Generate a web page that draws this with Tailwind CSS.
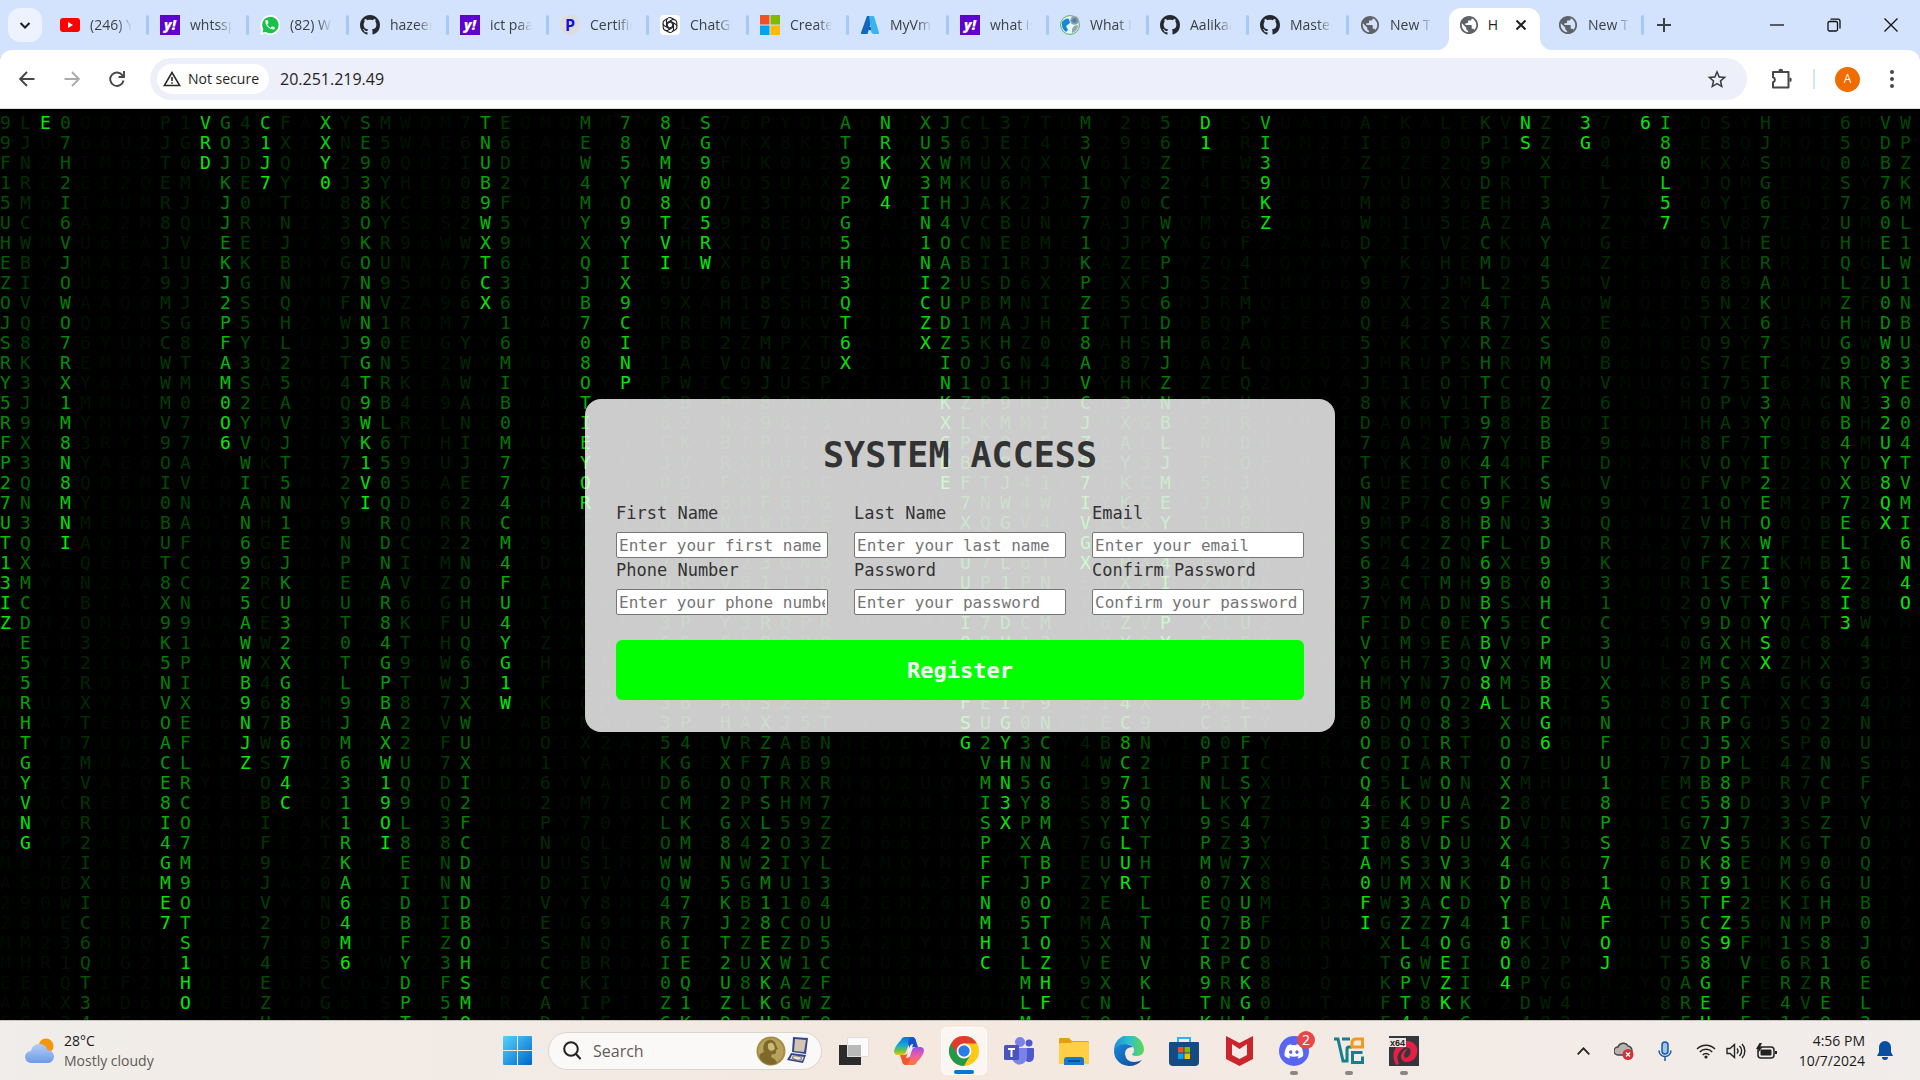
<!DOCTYPE html>
<html lang="en">
<head>
<meta charset="utf-8">
<title>System Access</title>
<script src="https://cdn.jsdelivr.net/npm/@tailwindcss/browser@4"></script>
</head>
<body class="flex min-h-screen flex-col overflow-hidden bg-black font-['Open_Sans','Noto_Sans',sans-serif]">

<svg class="hidden" aria-hidden="true">
  <symbol id="github" viewBox="0 0 16 16"><path fill="#24292f" d="M8 0C3.58 0 0 3.58 0 8c0 3.54 2.29 6.53 5.47 7.59.4.07.55-.17.55-.38 0-.19-.01-.82-.01-1.49-2.01.37-2.53-.49-2.69-.94-.09-.23-.48-.94-.82-1.13-.28-.15-.68-.52-.01-.53.63-.01 1.08.58 1.23.82.72 1.21 1.87.87 2.33.66.07-.52.28-.87.51-1.07-1.78-.2-3.64-.89-3.64-3.95 0-.87.31-1.59.82-2.15-.08-.2-.36-1.02.08-2.12 0 0 .67-.21 2.2.82.64-.18 1.32-.27 2-.27s1.36.09 2 .27c1.53-1.04 2.2-.82 2.2-.82.44 1.1.16 1.92.08 2.12.51.56.82 1.27.82 2.15 0 3.07-1.87 3.75-3.65 3.95.29.25.54.73.54 1.48 0 1.07-.01 1.93-.01 2.2 0 .21.15.46.55.38A8.01 8.01 0 0 0 16 8c0-4.42-3.58-8-8-8z"/></symbol>
  <symbol id="globe" viewBox="1 1 22 22"><path fill="#5f6368" d="M12 2C6.48 2 2 6.48 2 12s4.48 10 10 10 10-4.48 10-10S17.52 2 12 2zm-1 17.93c-3.95-.49-7-3.85-7-7.93 0-.62.08-1.21.21-1.79L9 15v1c0 1.1.9 2 2 2v1.93zm6.9-2.54c-.26-.81-1-1.39-1.9-1.39h-1v-3c0-.55-.45-1-1-1H8v-2h2c.55 0 1-.45 1-1V7h2c1.1 0 2-.9 2-2v-.41c2.93 1.19 5 4.06 5 7.41 0 2.08-.8 3.97-2.1 5.39z"/></symbol>
</svg>

<header class="shrink-0 bg-[#d3e2fd]">
  <nav class="flex h-[50px] items-center" aria-label="Tabs">
    <button class="ml-2 mr-[18px] grid h-[34px] w-[34px] shrink-0 place-items-center rounded-xl bg-[#ecf2fe]" aria-label="Search tabs"><svg class="h-3 w-3" viewBox="0 0 12 12" fill="none" stroke="#1f1f1f" stroke-width="2"><path d="M1.5 4 6 8.5 10.5 4"/></svg></button>
    <div class="flex items-center" id="tabs"></div>

    <div class="relative flex h-[50px] w-[91px] items-end">
      <button class="flex h-[42px] w-full items-center rounded-t-xl bg-white pb-2 pl-2.5"><svg class="h-5 w-5 shrink-0"><use href="#globe"/></svg><span class="ml-2 w-3 text-sm text-[#1f1f1f]">H</span><svg class="ml-4 h-3 w-3 shrink-0" viewBox="0 0 12 12" stroke="#1f1f1f" stroke-width="2"><path d="m1.5 1.5 9 9m0-9-9 9"/></svg></button>
      <svg class="absolute -left-3 bottom-0 h-3 w-3" viewBox="0 0 12 12"><path fill="#fff" d="M12 0v12H0A12 12 0 0 0 12 0z"/></svg>
      <svg class="absolute -right-3 bottom-0 h-3 w-3" viewBox="0 0 12 12"><path fill="#fff" d="M0 0v12h12A12 12 0 0 1 0 0z"/></svg>
    </div>
    <button class="ml-[18px] flex w-[83px] items-center gap-2.5"><svg class="h-5 w-5 shrink-0"><use href="#globe"/></svg><span class="w-[42px] overflow-hidden whitespace-nowrap text-left text-sm text-[#3c4043] [mask-image:linear-gradient(to_right,black_65%,transparent)]">New Tab</span></button>
    <i class="h-5 w-[3px] rounded-full bg-[#a8c7fa]"></i>
    <button class="ml-2.5 grid h-5 w-5 place-items-center" aria-label="New tab"><svg width="14" height="14" viewBox="0 0 14 14" stroke="#3c4043" stroke-width="2"><path d="M7 0v14M0 7h14"/></svg></button>
    <div class="ml-auto flex items-center gap-[43px] pr-[22px]">
      <button aria-label="Minimise"><svg width="14" height="14" viewBox="0 0 14 14" stroke="#111" stroke-width="1.3"><path d="M0 7h14"/></svg></button>
      <button aria-label="Restore"><svg width="14" height="14" viewBox="0 0 14 14" fill="none" stroke="#111" stroke-width="1.3"><rect x="1" y="3.5" width="9.5" height="9.5" rx="1.5"/><path d="M3.5 1.2H11A2 2 0 0 1 13 3.2V10.5"/></svg></button>
      <button aria-label="Close"><svg width="14" height="14" viewBox="0 0 14 14" stroke="#111" stroke-width="1.3"><path d="m.5.5 13 13m0-13-13 13"/></svg></button>
    </div>
  </nav>

  <div class="flex h-[59px] items-center rounded-t-xl border-b border-[#dadce0] bg-white pl-[9px] pr-4">
    <div class="flex gap-[9px]">
      <button class="grid h-9 w-9 place-items-center" aria-label="Back"><svg width="16" height="16" viewBox="0 0 16 16" fill="none" stroke="#474747" stroke-width="1.9"><path d="M15.5 8H2M8 1 1.2 8 8 15"/></svg></button>
      <button class="grid h-9 w-9 place-items-center" aria-label="Forward"><svg width="16" height="16" viewBox="0 0 16 16" fill="none" stroke="#acacac" stroke-width="1.9"><path d="M.5 8H14M8 1l6.8 7L8 15"/></svg></button>
      <button class="grid h-9 w-9 place-items-center" aria-label="Reload"><svg width="16" height="16" viewBox="0 0 16 16" fill="none" stroke="#474747" stroke-width="1.9"><path d="M14.5 9.5A6.700 6.700 0 1 1 13.5 4.5L15 6M15 0v6H9.5"/></svg></button>
    </div>
    <div class="ml-[15px] flex h-[42px] min-w-0 flex-1 items-center rounded-full bg-[#edf0fa] pl-[7px] pr-5">
      <button class="flex h-[30px] items-center gap-[7px] rounded-full bg-white pl-1.5 pr-2.5 text-sm text-[#1f1f1f]"><svg width="18" height="16" viewBox="0 0 18 16" fill="none" stroke="#2a2a2a" stroke-width="1.6"><path d="M9 1.5 1.3 14.5h15.4zM9 6v4M9 11.2v1.6"/></svg>Not secure</button>
      <input class="ml-[11px] min-w-0 flex-1 bg-transparent text-base text-[#1f1f1f] outline-none" aria-label="Address" value="20.251.219.49">
      <button aria-label="Bookmark"><svg width="20" height="20" viewBox="2 1 20 21" fill="#3c3c3c"><path d="M22 9.24l-7.19-.62L12 2 9.19 8.63 2 9.24l5.46 4.73L5.82 21 12 17.27 18.18 21l-1.63-7.03L22 9.24zM12 15.4l-3.76 2.27 1-4.28-3.32-2.88 4.38-.38L12 6.1l1.71 4.04 4.38.38-3.32 2.88 1 4.28L12 15.4z"/></svg></button>
    </div>
    <button class="ml-6" aria-label="Extensions"><svg width="21" height="22" viewBox="0 0 21 22" fill="none" stroke="#474747" stroke-width="2"><path d="M2 4h15.5v15.5H2v-5.200a2.600 2.600 0 0 0 0-5z" stroke-linejoin="round"/><path d="M7.500 3a2.300 2.300 0 0 1 4.600 0zM18.500 9.500a2.300 2.300 0 0 1 0 4.600z" fill="#474747" stroke="none"/></svg></button>
    <i class="ml-[21px] h-5 w-0.5 bg-[#d3e2fd]"></i>
    <button class="ml-5 grid h-[25px] w-[25px] place-items-center rounded-full bg-[#ef6c00] text-xs text-white">A</button>
    <button class="ml-5 grid h-9 w-6 place-items-center" aria-label="Menu"><svg width="4" height="18" viewBox="0 0 4 18" fill="#474747"><circle cx="2" cy="2" r="2"/><circle cx="2" cy="9" r="2"/><circle cx="2" cy="16" r="2"/></svg></button>
  </div>
</header>

<main class="relative grid flex-1 place-items-center overflow-hidden bg-black font-['DejaVu_Sans_Mono',monospace]">
  <div id="rain" class="absolute inset-0 flex overflow-hidden pt-1 text-[18px] leading-5" aria-hidden="true"></div>

  <form class="relative mt-0.5 w-[750px] max-w-full rounded-2xl bg-white/80 px-[31px] pb-8 pt-9 text-[#333]">
    <h1 class="mb-[26px] text-center text-[35px] font-bold leading-10">SYSTEM ACCESS</h1>
    <div class="grid grid-cols-3 gap-x-[26px] text-[17px]">
      <div><label for="first" class="mb-1.5 block leading-[25px]">First Name</label><input id="first" placeholder="Enter your first name" class="block h-[26px] w-full rounded-xs border border-[#767676] bg-white px-0.5 text-base placeholder:text-[#757575]"></div>
      <div><label for="last" class="mb-1.5 block leading-[25px]">Last Name</label><input id="last" placeholder="Enter your last name" class="block h-[26px] w-full rounded-xs border border-[#767676] bg-white px-0.5 text-base placeholder:text-[#757575]"></div>
      <div><label for="email" class="mb-1.5 block leading-[25px]">Email</label><input id="email" type="email" placeholder="Enter your email" class="block h-[26px] w-full rounded-xs border border-[#767676] bg-white px-0.5 text-base placeholder:text-[#757575]"></div>
      <div><label for="phone" class="mb-1.5 block leading-[25px]">Phone Number</label><input id="phone" type="tel" placeholder="Enter your phone number" class="block h-[26px] w-full rounded-xs border border-[#767676] bg-white px-0.5 text-base placeholder:text-[#757575]"></div>
      <div><label for="pass" class="mb-1.5 block leading-[25px]">Password</label><input id="pass" type="password" placeholder="Enter your password" class="block h-[26px] w-full rounded-xs border border-[#767676] bg-white px-0.5 text-base placeholder:text-[#757575]"></div>
      <div><label for="confirm" class="mb-1.5 block leading-[25px]">Confirm Password</label><input id="confirm" type="password" placeholder="Confirm your password" class="block h-[26px] w-full rounded-xs border border-[#767676] bg-white px-0.5 text-base placeholder:text-[#757575]"></div>
    </div>
    <button type="button" class="mt-[25px] block h-[60px] w-full rounded-md bg-[#00ff00] text-[22px] font-bold text-white">Register</button>
  </form>
</main>

<footer class="grid h-[60px] shrink-0 grid-cols-[1fr_auto_1fr] items-center border-t border-[#c9c2bd] bg-linear-to-r from-[#f0edea] via-[#f4e8df] to-[#f1edeb]">
  <button class="flex items-center gap-[9px] pl-[25px] text-left text-sm leading-5">
    <svg width="30" height="26" viewBox="0 0 30 26"><defs><linearGradient id="cl" x2="0" y2="1"><stop stop-color="#b4cdf8"/><stop offset="1" stop-color="#6f9ae8"/></linearGradient></defs><circle cx="21" cy="8" r="7.5" fill="#f5960f"/><path d="M6 25a6 6 0 0 1 0-12 8.500 8.500 0 0 1 16.500-1A6.600 6.600 0 0 1 24 25z" fill="url(#cl)"/></svg>
    <span class="text-[#1a1a1a]">28°C<br><span class="text-[#5d5a58]">Mostly cloudy</span></span>
  </button>

  <div class="flex items-center pl-2.5">
    <button aria-label="Start"><svg width="29" height="29" viewBox="0 0 29 29"><defs><linearGradient id="win" gradientUnits="userSpaceOnUse" x1="0" y1="0" x2="29" y2="29"><stop stop-color="#55d2ff"/><stop offset="1" stop-color="#0067c8"/></linearGradient></defs><path fill="url(#win)" d="M0 1q0-1 1-1h13v14H0zM15 0h13q1 0 1 1v13H15zM0 15h14v14H1q-1 0-1-1zM15 15h14v13q0 1-1 1H15z"/></svg></button>
    <label class="ml-4 flex h-[38px] w-[274px] items-center rounded-full border border-[#dbd5d1] bg-[#fbf9f8] pl-3.5 pr-3">
      <svg width="18" height="19" viewBox="0 0 18 19" fill="none" stroke="#222" stroke-width="2"><circle cx="8" cy="8" r="6.8"/><path d="m13 13 4.500 5"/></svg>
      <input type="search" aria-label="Search" placeholder="Search" class="ml-3 min-w-0 flex-1 bg-transparent text-base placeholder:text-[#5f5c5a]">
      <svg width="53" height="30" viewBox="0 0 53 30"><circle cx="15" cy="15" r="14.5" fill="#a48d45"/><circle cx="15" cy="15" r="12.5" fill="#b8a35c"/><path d="M9 6q5-5 10 0l1 3 2 4-2 1v3q-2 2-4 1l-1 3q5 2 6 6-7 4-14-1-5-4-3-8l4-2q-2-5 1-10z" fill="#7d692b"/><path d="M12 8q4-3 6 1l1 4-3 2q-5 0-4-7z" fill="#cbb976"/><path d="m37 1 15 1-2 16-14-2z" fill="#31488c"/><path d="m39 3 11 1-2 12-10-1z" fill="#d3c4b5"/><path d="m35 17 15 2-3 8-16-3z" fill="#31488c"/><path d="m36 19 12 2-2 4-12-2z" fill="#eae0d5"/><ellipse cx="41" cy="22" rx="4.5" ry="2" fill="none" stroke="#7c6d5e" transform="rotate(9 41 22)"/></svg>
    </label>
    <div class="ml-[9px] flex items-center gap-[9px]">
      <button class="relative grid h-12 w-[46px] place-items-center" aria-label="Task view"><svg width="30" height="28" viewBox="0 0 30 28"><path d="M0 8h22v20H0z" fill="#2b2b2b"/><path d="M8 0h22v20H8z" fill="#fafafa"/><path d="M8 8h14v12H8z" fill="#b9b9b9"/><path d="M8.500.5h21v19h-21z" fill="none" stroke="#ddd"/></svg></button>
      <button class="relative grid h-12 w-[46px] place-items-center" aria-label="Copilot"><svg width="30" height="28" viewBox="0 0 30 28"><defs><linearGradient id="c1" x2="0" y2="1"><stop stop-color="#0c6ee0"/><stop offset=".45" stop-color="#17a8d8"/><stop offset=".75" stop-color="#6cc04a"/><stop offset="1" stop-color="#f0c400"/></linearGradient><linearGradient id="c2" x2="0" y2="1"><stop stop-color="#a14bea"/><stop offset=".5" stop-color="#ee5fa0"/><stop offset="1" stop-color="#fb7a32"/></linearGradient></defs><path d="M7 3q1-3 4-3h7q3 0 4 4h-3q-3 0-4 3l-3 8q-1 3-4 3H4q-4 0-4-4 1-5 7-11z" fill="url(#c1)"/><path d="M23 25q-1 3-4 3h-7q-3 0-4-4h3q3 0 4-3l3-8q1-3 4-3h4q4 0 4 4-1 5-7 11z" fill="url(#c2)"/><path d="M18 0q3 0 4 4l2 6h-4q-3 0-4 3l-2-7q1-6 4-6z" fill="#1a51c8"/><path d="M12 28q-3 0-4-4l-2-6h4q3 0 4-3l2 7q-1 6-4 6z" fill="#f4562f"/><path d="m13 18 3-9q1-2 3-2l-3 12q-1 2-4 2z" fill="#f7efeb"/></svg></button>
      <button class="relative grid h-12 w-[46px] place-items-center rounded-md border border-white/60 bg-white/60" aria-label="Chrome"><svg width="30" height="30" viewBox="0 0 30 30"><circle cx="15" cy="15" r="15" fill="#ffc914"/><path d="M2 7.500A15 15 0 0 0 15 30l6.500-11.300L15 15z" fill="#229a4a"/><path d="M2 7.500A15 15 0 0 1 28 7.500H15V15l-6.500 3.700z" fill="#e33b2e"/><circle cx="15" cy="15" r="7.4" fill="#fff"/><circle cx="15" cy="15" r="5.700" fill="#2a7ce8"/></svg><i class="absolute bottom-0 h-1 w-5 rounded-full bg-[#0078d4]"></i></button>
      <button class="relative grid h-12 w-[46px] place-items-center" aria-label="Teams"><svg width="30" height="28" viewBox="0 0 30 28"><circle cx="16" cy="5" r="5" fill="#7b83eb"/><circle cx="25" cy="6" r="3.5" fill="#5059c9"/><path d="M20 11h9q1 0 1 1v8a5 5 0 0 1-8 4z" fill="#5059c9"/><path d="M8 11h15v9a7.500 7.500 0 0 1-15 0z" fill="#7b83eb"/><rect y="8" width="15" height="15" rx="1.5" fill="#4b53bc"/><path d="M4 12h7M7.500 12v8" stroke="#fff" stroke-width="2"/></svg></button>
      <button class="relative grid h-12 w-[46px] place-items-center" aria-label="File Explorer"><svg width="30" height="28" viewBox="0 0 30 28"><path d="M0 2q0-1 1-1h9l3 3h15q2 0 2 2v8H0z" fill="#e0a010"/><path d="M0 8q0-2 2-2h9l2-1h15q2 0 2 2v19q0 1-1 1H1q-1 0-1-1z" fill="#ffcf45"/><path d="M5 28v-5q0-3 3-3h14q3 0 3 3v5z" fill="#1679cf"/><path d="M9 24h12" stroke="#0c4f95" stroke-width="2"/></svg></button>
      <button class="relative grid h-12 w-[46px] place-items-center" aria-label="Edge"><svg width="30" height="30" viewBox="0 0 30 30"><defs><linearGradient id="e1" x2="1"><stop stop-color="#1b8fd8"/><stop offset=".5" stop-color="#2cc0cf"/><stop offset="1" stop-color="#62d84e"/></linearGradient><linearGradient id="e2" x2="1" y2="1"><stop stop-color="#1c86dc"/><stop offset="1" stop-color="#0d4a94"/></linearGradient></defs><path d="M0 15A15 15 0 0 1 30 13q0 7-7 7-5 0-5-2 2-1 2-4 0-5-7-6Q4 8 0 15z" fill="url(#e1)"/><path d="M0 15Q3 8 11 8q5 0 8 3-8 0-8 7 1 8 9 8 4 0 8-2-5 6-13 6A15 15 0 0 1 0 15z" fill="url(#e2)"/></svg></button>
      <button class="relative grid h-12 w-[46px] place-items-center" aria-label="Store"><svg width="30" height="30" viewBox="0 0 30 30"><path d="M9 7V2h12v5" fill="none" stroke="#2bb6f0" stroke-width="2"/><path d="M0 7q0-1 1-1h28q1 0 1 1v19q0 4-4 4H4q-4 0-4-4z" fill="#164a82"/><path d="M9 11h5.500v5.500H9z" fill="#f25022"/><path d="M15.500 11H21v5.500h-5.500z" fill="#7fba00"/><path d="M9 17.500h5.500V23H9z" fill="#00a4ef"/><path d="M15.500 17.500H21V23h-5.500z" fill="#ffb900"/></svg></button>
      <button class="relative grid h-12 w-[46px] place-items-center" aria-label="McAfee"><svg width="27" height="30" viewBox="0 0 27 30"><path d="m0 0 13.500 7L27 0v23l-13.500 7L0 23z" fill="#c8252c"/><path d="m6 8 7.500 5L21 8v11l-7.500 4L6 19z" fill="#f3ebe7"/></svg></button>
      <button class="relative grid h-12 w-[46px] place-items-center" aria-label="Discord"><svg width="30" height="30" viewBox="0 0 30 30"><circle cx="15" cy="15" r="15" fill="#5865f2"/><path transform="translate(5.5 6) scale(.78)" fill="#fff" d="M20.317 4.370a19.790 19.790 0 0 0-4.885-1.515c-.3.400-.5.900-.687 1.287a18.270 18.270 0 0 0-5.487 0 12.640 12.640 0 0 0-.7-1.287A19.740 19.740 0 0 0 3.677 4.370C.533 9.046-.32 13.580.099 18.057a19.900 19.900 0 0 0 5.993 3.030c.5-.6.950-1.300 1.300-2.100a13 13 0 0 1-1.900-.95l.450-.4c3.928 1.793 8.180 1.793 12.100 0l.450.400a12.300 12.300 0 0 1-1.900.95c.4.750.85 1.450 1.300 2.100a19.840 19.840 0 0 0 6-3.030c.5-5.177-.838-9.674-3.549-13.660zM8.020 15.330c-1.183 0-2.157-1.085-2.157-2.419s.956-2.419 2.157-2.419c1.210 0 2.176 1.096 2.157 2.420 0 1.333-.956 2.418-2.157 2.418zm7.975 0c-1.183 0-2.157-1.085-2.157-2.419s.955-2.419 2.157-2.419c1.210 0 2.176 1.096 2.157 2.420 0 1.333-.946 2.418-2.157 2.418z"/></svg><span class="absolute right-0.5 top-1 grid h-[18px] w-[18px] place-items-center rounded-full bg-[#e54848] text-sm leading-none text-white">2</span><i class="absolute bottom-0 h-1 w-2 rounded-full bg-[#8a8684]"></i></button>
      <button class="relative grid h-12 w-[46px] place-items-center" aria-label="VMware"><svg width="30" height="28" viewBox="0 0 30 28" fill="none" stroke-width="3"><path d="M0 2h4l5 22h4V12q0-2 2-2h3M8 2h8M28.500 15.500H18.500v10h10v-6" stroke="#167e8c"/><path d="M18 10V6q0-4 4-4h6.500v8z" stroke="#f09a1c"/></svg><i class="absolute bottom-0 h-1 w-2 rounded-full bg-[#8a8684]"></i></button>
      <button class="relative grid h-12 w-[46px] place-items-center" aria-label="x64 debugger"><svg width="30" height="30" viewBox="0 0 30 30"><path d="M0 0h30v30H0z" fill="#34363d"/><path d="M7 29Q1 17 9 9q7-6 14-3 7 4 5 12-3 9-12 8-5-2-4-7 2-6 7-6-4 3-4 7 1 3 4 1 4-4 2-8-4-4-9 1-6 6-2 14z" fill="#e71f45"/><path d="M0 2h17v9H0z" fill="#e9e6e4"/><text x="1" y="10" font-size="9" font-weight="700" font-family="Liberation Sans" fill="#222">x64</text></svg><i class="absolute bottom-0 h-1 w-2 rounded-full bg-[#8a8684]"></i></button>
    </div>
  </div>

  <div class="flex items-center justify-end pr-[27px] text-[#1a1a1a]">
    <button aria-label="Hidden icons"><svg width="13" height="8" viewBox="0 0 13 8" fill="none" stroke="#222" stroke-width="1.7"><path d="m.7 7.300 5.800-6 5.800 6"/></svg></button>
    <button class="ml-6" aria-label="OneDrive"><svg width="20" height="18" viewBox="0 0 20 18"><path d="M4 13a4 4 0 0 1 0-8 5.500 5.500 0 0 1 10-1q4 1 4 5t-4 4z" fill="#b7b3b1" stroke="#444" stroke-width="1.4"/><circle cx="14" cy="12.500" r="5.5" fill="#d13438"/><path d="m12 10.500 4 4m0-4-4 4" stroke="#fff" stroke-width="1.3"/></svg></button>
    <button class="ml-6" aria-label="Microphone"><svg width="14" height="20" viewBox="0 0 14 20" fill="none" stroke="#1b58a8" stroke-width="1.5"><rect x="4" y="1" width="6" height="12" rx="3" fill="#9fc3ec"/><path d="M1 9.500a6 6 0 0 0 12 0M7 15.500V20"/></svg></button>
    <button class="ml-6 flex items-center gap-2.5" aria-label="Network, volume and battery">
      <svg width="20" height="16" viewBox="0 0 20 16" fill="none" stroke="#222" stroke-width="1.5"><path d="M1 6a12.500 12.500 0 0 1 18 0M3.800 9a8.600 8.600 0 0 1 12.400 0M6.700 12a4.600 4.600 0 0 1 6.600 0"/><circle cx="10" cy="14" r="1.6" fill="#222" stroke="none"/></svg>
      <svg width="20" height="16" viewBox="0 0 20 16" fill="none" stroke="#222" stroke-width="1.4"><path d="M1 5.500h3L8.500 1.500v13L4 10.500H1zM11 5.500a4 4 0 0 1 0 5M13.500 3a7 7 0 0 1 0 10M16 1a10 10 0 0 1 0 14"/></svg>
      <svg width="21" height="16" viewBox="0 0 21 16"><rect x="2" y="4" width="16" height="11" rx="3" fill="none" stroke="#222" stroke-width="1.5"/><rect x="4.500" y="6.500" width="11" height="6" rx="1" fill="#222"/><path d="M19 8h2v3h-2zM3.500 0 0 6h3l-1 4 4.500-6H4l2-4z" fill="#222"/></svg>
    </button>
    <button class="ml-4 w-[72px] text-right text-sm leading-5">4:56 PM<br>10/7/2024</button>
    <button class="ml-3" aria-label="Notifications"><svg width="16" height="19" viewBox="0 0 16 19" fill="#0a4ea2"><path d="M8 0a6 6 0 0 1 6 6v5l2 4H0l2-4V6a6 6 0 0 1 6-6zM5 16h6a3 3 0 0 1-6 0z"/></svg></button>
  </div>
</footer>

<script>
  // Browser tabs: [icon markup, title]
  const yahoo = '<span class="grid h-5 w-5 shrink-0 place-items-center bg-[#5f01d1] text-sm leading-none font-extrabold italic text-white">y!</span>';
  const github = '<svg class="h-5 w-5 shrink-0"><use href="#github"/></svg>';
  const petals = [0, 60, 120, 180, 240, 300].map(a => `<path transform="rotate(${a} 10 10)" d="M6.500 6.500V5.500a3.300 3.300 0 0 1 5-2.500l3 1.800M6.500 6.500v4.500l3 1.800"/>`).join('');
  const tabs = [
    ['<svg class="h-5 w-5 shrink-0" viewBox="0 0 20 20"><rect y="3" width="20" height="14" rx="3" fill="#f00"/><path d="M8 7v6l5-3z" fill="#fff"/></svg>', '(246) YouTube'],
    [yahoo, 'whtsspp web'],
    ['<svg class="h-5 w-5 shrink-0" viewBox="0 0 24 24"><path d="M12 0a12 12 0 1 1-6 22L0 24l2-6A12 12 0 0 1 12 0z" fill="#fff"/><path d="M12 2a10 10 0 1 1-5 18.500L3 21l1-4A10 10 0 0 1 12 2z" fill="#16c24a"/><path transform="translate(4.500 4.500) scale(.62)" fill="#fff" d="M6.620 10.790c1.440 2.830 3.760 5.140 6.590 6.590l2.200-2.200c.27-.27.67-.36 1.020-.24 1.120.37 2.330.57 3.570.57.55 0 1 .45 1 1V20c0 .55-.45 1-1 1-9.390 0-17-7.610-17-17 0-.55.45-1 1-1h3.500c.55 0 1 .45 1 1 0 1.250.2 2.450.57 3.570.11.35.03.74-.25 1.020l-2.200 2.200z"/></svg>', '(82) WhatsApp'],
    [github, 'hazeem'],
    [yahoo, 'ict paath'],
    ['<span class="grid h-5 w-5 shrink-0 place-items-center rounded-full bg-[#dcdcdc] font-[\'Liberation_Serif\',serif] text-base leading-none font-bold text-[#1410d8]">P</span>', 'Certificate'],
    ['<svg class="h-5 w-5 shrink-0 rounded bg-white" viewBox="0 0 20 20" fill="none" stroke="#222" stroke-width="1.1">' + petals + '</svg>', 'ChatGPT'],
    ['<svg class="h-5 w-5 shrink-0" viewBox="0 0 20 20"><path d="M0 0h9.500v9.500H0z" fill="#f25022"/><path d="M10.500 0H20v9.500h-9.500z" fill="#7fba00"/><path d="M0 10.500h9.500V20H0z" fill="#00a4ef"/><path d="M10.500 10.500H20V20h-9.500z" fill="#ffb900"/></svg>', 'Create a'],
    ['<svg class="h-5 w-5 shrink-0" viewBox="0 0 20 20"><path d="M7 1h6L7.500 19H2q-1.500 0-1-1.500z" fill="#1566c0"/><path d="M8 12h7l-1 4-5-1z" fill="#0f5aa8"/><path d="M9 1h4q1 0 1.300 1L19 17.500q.5 1.500-1 1.500h-4.500l-2-1z" fill="#39b4f0"/></svg>', 'MyVm -'],
    [yahoo, 'what is'],
    ['<svg class="h-5 w-5 shrink-0" viewBox="0 0 20 20"><circle cx="10" cy="10" r="9.4" fill="#e9f6f4" stroke="#4bb36a"/><path d="M2 7q4-5 7-3l1 4-4 3 2 4-2 2Q1 14 2 7z" fill="#1788d8"/><path d="M12 18q6-2 6-8l-4 1-2 3z" fill="#8fa9b8"/><circle cx="14.500" cy="5.500" r="4.3" fill="#8f9ca6"/><circle cx="14.500" cy="5.500" r="2.3" fill="#2e8ad0"/><circle cx="15" cy="5" r="1" fill="#e04b3a"/></svg>', 'What Is'],
    [github, 'Aalikaa'],
    [github, 'Master'],
    ['<svg class="h-5 w-5 shrink-0"><use href="#globe"/></svg>', 'New Tab']
  ];
  document.getElementById('tabs').innerHTML = tabs.map(([icon, title], i) => `
    <button class="flex w-[86px] items-center gap-2.5">${icon}<span class="w-[42px] overflow-hidden whitespace-nowrap text-left text-sm text-[#3c4043] [mask-image:linear-gradient(to_right,black_65%,transparent)]">${title}</span></button>
    ${i < 13 ? '<i class="mr-[11px] h-5 w-[3px] rounded-full bg-[#a8c7fa]"></i>' : '<i class="w-[3px]"></i>'}`).join('');

  // Falling code: column -> [glyphs from the top, row of the falling head, row the previous head would have reached, glyphs that end at the bottom]
  const drops = {
    0: ['99F15UHEZOJSRY5RFP27UT13IZ', 26], 1: ['LJNRMCWBIVQ8K3J9X3QN3QXMCDE55RHTGYVNG', 37, 96, '6S98MHEAG'],
    2: ['E', 1, 100, '0V2RIKL'], 3: ['07H2I6VJOWO7RX1M8N8MNI', 22, 90, '7DZ5C6PZBWE31QX2'],
    4: ['', 0, 64, 'NBO32RXT7MVRR2IXIC6QT34'], 6: ['', 0, 96, '0RDGFDF'],
    8: ['PJTER8J19MSCWWMV9OI0BUT8X9K5NVOACE8I4GME7', 41], 9: ['1G0MJQVUJJG8TM077AVNAFCCN91PIXEFLRCO7M9OTS1HO', 45],
    10: ['VRD', 3], 11: ['GOJKJJEKJ2PFAM0O6', 17], 12: ['43DE0REKGS5Y3S2YVWIAN6925AWWB9NJZ', 33],
    13: ['C1J7', 4, 66, 'KTNHGGRCEWX467WSOBIF9JV274EZU'], 14: ['FXQYTNJBNQHL25AVJT5N1EJKU32XG8B674C', 35],
    16: ['XXY0', 4, 84, 'HDI2OKTZ0ND05CG2'], 17: ['YN2J839G7FWJT4Q3Y72Y9NPEUT0TL9JM6311RKA64M6', 43],
    18: ['SE938OKONNN9GT9WK1VI', 20], 19: ['M50YKYRU9V10NRBL650QRDNAR84GPBAXW19OI', 37, 98, 'PXSETWJSI'],
    20: ['WWQHCS9N5ZRE5K4RT95DQCIV6KT9T822UQ9L8EIDBFYDPT', 52],
    22: ['', 0, 60, '9SWAO9MG2A9LHUA6R2MZGFHWW7VF7DQ38NNIIZ3F51'],
    23: ['76I082W7667YWWANIJE2R2NOHUQ6JXWUXI2FCDNDBOHSMO', 48], 24: ['TNUB9WXTCX', 10],
    25: ['E6D2F5963616MIB0M774CM4FU4YG1W', 30, 96, 'F6IZOJ60R0'], 27: ['', 0, 70, 'SQHR9DAIYZHFKBO162PNUDVESCCAD'],
    29: ['MEW4MYXQJB708OTIEYOR', 20, 78, 'XYVM7QSIYGNBKIL'], 30: ['', 0, 84, '70L1V89QRIPF'],
    31: ['785YO9YIX9CINP', 14], 33: ['8VMW8TVI', 8, 57, '99RP1P38CJDIQL7NM35WE335KDCLOWQ4R6I0ZG'],
    34: ['LAS7X2H1UXRBAWB2KVOGYT4RHPS9DBP4G6MKMWW77IEQ1K', 54], 35: ['SG90O5RW', 8],
    36: ['7YFU79XX6HM2VCPNBRF8ND1V6YCXMAHVXO2G8N5KJT2UZO', 52], 37: ['6KUQEPIPB1EZO9P2TXXMTV28331RAQARFQPX4WGB2ZU8LB', 60],
    38: ['PXK538Q6P87MNJ89PHWFWE31KRB4DSXZ7TSL22M18EXKKU', 50], 39: ['Y80UTEIVES0P2U78JHGBRFG17QRLV2JAARH5OIU1CZWAGD', 58],
    40: ['QKNAMQR5SHKXZSD2TC6FZLNJAPBD825BBXM93Y10OD1ZWE', 62], 41: ['L5ZXQVMPHIVTUPK3R7CGEW6DPRP1E9TN9R7ZZL34U5CFZO', 58],
    42: ['AT92PG5H3QT6X', 13], 44: ['NRKV4', 5], 46: ['XUX3IN1NICZX', 12], 47: ['J5WMH4OA2UDZINKXGDE', 19],
    48: ['C6MKJVCBUP15O1ZLPBF7XDUUTI8KWFSG', 32], 49: ['LJUUACNISBMKJOPKTRTNQV7PX7RVGEU2VMISPFFNMHC', 43],
    50: ['3EX6KBE1DMAHG19MOQJWGKL1CDUHWIGYHN3X', 36], 51: ['7IQM2UBR6NJZNHHMAE44VE6PVC1QYF03N5YPXTJ051LMLM', 50],
    52: ['T4XTJNMJXIH04JJIFV1W4ZTNJM3E19NCNG8MABPOTOZHF', 45], 54: ['M3V1771KPZI8AVCJZ97IVGX', 23, 72, '441SS7EZ2M5V9C7'],
    55: ['', 0, 62, 'BW98YGUYEAXEXNO'], 56: ['291Y0JJZX5TH8H3XAYKKCPHX7ZYD44C8C75ILUR', 39],
    57: ['89980FPEFC1S7KVGL3CZXN4ASV9RTX9N21QYTHTLTNVKLV', 54], 58: ['56Z2CWYPJ6DHJZNBLJMEYD4IXPY', 27],
    60: ['D1', 2, 50, 'F4TMGZ5JB6AZP2NT5J1KE2DXF9MAC0PNL9PM0EQIR9TK'], 61: ['', 0, 63, '0ILKSZW7Q72PRNU'],
    62: ['SRW5L6F4IMPALQURDOJA0W3QKUSH4LTFISY437XUBDCKGL', 49], 63: ['VI39KZ', 6, 70, 'YCXZ7YX8MFD8804'],
    66: ['', 0, 90, 'RTO01SA3URJQTG'], 68: ['AIZ7MWDY90Q5JJ8D7TGN9S637FVYHB0OCQ43IA0FI', 41], 69: ['', 0, 68, 'DBQ56E0MUWGXTKFF'],
    70: ['K0ZU81IK7X4KR1KOAKEPPC4CMDMHYMQOILK48SM3ZLGPT4', 49], 71: ['', 0, 64, '7422TAC97N0QIAWD9V3XAZ4WV8A'],
    72: ['L02X35VHJ2SYPOVTW0CC8ZOMD0E37Q8RROUFDVNC7OEZK', 45], 73: ['', 0, 58, 'TXST13AK6OHQNHNEAQO23TTNASU3KD4GIIKG'],
    74: ['KP9DEACML4RRHTT974T9BF69BYBV8A', 30], 75: ['V1PRHZKD2T7ZRCB8Y4KFNLXBS5VXMLXOOX2DX4DY10O4', 44],
    76: ['NS', 2, 70, 'YXE9Y5DU87M8V4GHBFK0PD4'], 77: ['ZZXT3AY45AXSMQZBBFSW3D90HCPMBRG6', 32, 84, 'EHYDTKQVLJ2YW8'],
    78: ['', 0, 82, 'UUEN3G81NVPG42'], 79: ['3G', 2], 80: ['704L7ZGZVWE0BV6I9DV9QRK31C3UX5NFU18PS71AFOJ', 43],
    82: ['6', 1], 83: ['I80L57', 6, 76, '54LK8CD7EE186QHTUTQ8E'], 84: ['', 0, 63, 'GH1HKOZZVQR2Y028OJC7MCGZDR5505ARF'],
    85: ['OEKJ0S0I05TQSIOH8VF1V7F1O9GMPIRJDB57VKITCS8GEU', 48], 86: ['S8XQYV1K8NX977PAFOVOHKZSVDXCSCP5P88JS89FZ9', 42],
    87: ['', 0, 58, '8HB92IYE5V37YPYTX7ETOHXATGXLPD75E125FVFFF'], 88: ['HJSG67ERAK67TI3YTI2EOWI1YYSX', 28, 90],
    89: ['', 0, 60, 'RAU1S46AQ9D2M0FK0FQ0ZGX5S4R33KMKKN16R41'], 90: ['', 0, 68, 'YSACHKCQPZ7VSG96IMSRZVG'],
    91: ['', 0, 57, 'ZNG68ROPBEB68T8XG320NCPZT0GHP81REO'], 92: ['650S7UHQLZHG9RNB4YX7EL1ZI3', 26],
    93: ['', 0, 58, 'HGZFHWDT3HMDB26I628W43G4NUSFYVOQUB0J6EL2'], 94: ['VDB760ELU0DW8Y32UY8QX', 21], 95: ['WPZKML1W1NBU3E004TVMI6N4O', 25]
  };
  const glyphs = 'ABCDEFGHIJKLMNOPQRSTUVWXYZ0123456789';
  const rows = 46;
  let seed = 7;
  const pick = () => glyphs[(seed = (seed * 1103515245 + 12345) % 2147483648) % 36];
  let html = '';
  for (let c = 0; c < 96; c++) {
    const [top, head, old = 115, tail = ''] = drops[c] || ['', 0];
    html += '<div class="w-5 shrink-0">';
    for (let r = 1; r <= rows; r++) {
      const inTop = r <= top.length, fromEnd = tail.length - (rows - r) - 1;
      const ch = inTop ? top[r - 1] : fromEnd >= 0 ? tail[fromEnd] : pick();
      const g = Math.max(11, Math.round(238 * Math.pow(0.95, (inTop ? head : old) - r)));
      html += `<span class="block h-5" style="color:rgb(0,${g},0)">${ch}</span>`;
    }
    html += '</div>';
  }
  document.getElementById('rain').innerHTML = html;
</script>
</body>
</html>
